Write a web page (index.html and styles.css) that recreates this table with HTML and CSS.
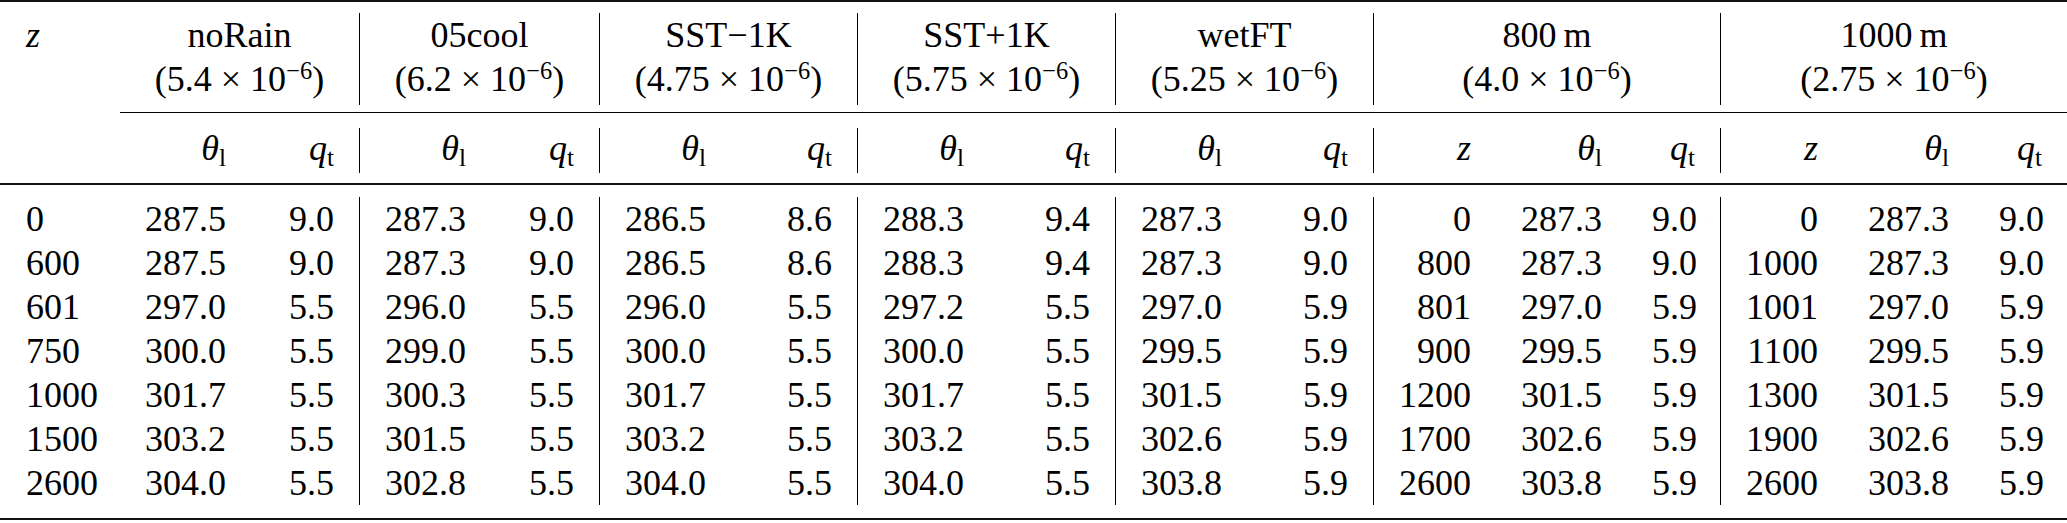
FILE: index.html
```html
<!DOCTYPE html>
<html lang="en">
<head>
    <meta charset="UTF-8">
    <title>Initial profiles</title>
    <link rel="stylesheet" href="styles.css">
</head>
<body>
    <table class="profiles">
        <colgroup>
            <col style="width:120px">
            <col style="width:131px"><col style="width:109px">
            <col style="width:131px"><col style="width:109px">
            <col style="width:131px"><col style="width:127px">
            <col style="width:131px"><col style="width:127px">
            <col style="width:131px"><col style="width:127px">
            <col style="width:122px"><col style="width:131px"><col style="width:94px">
            <col style="width:122px"><col style="width:131px"><col style="width:93px">
        </colgroup>
        <tbody>
            <tr class="rule heavy"><td colspan="17"></td></tr>
            <tr class="gap g11"><td colspan="17"></td></tr>
            <tr class="head">
                <td class="first"><i>z</i></td>
                <td colspan="2" class="group sep">noRain<br>(5.4 × 10<sup>−6</sup>)</td>
                <td colspan="2" class="group sep">05cool<br>(6.2 × 10<sup>−6</sup>)</td>
                <td colspan="2" class="group sep">SST−1K<br>(4.75 × 10<sup>−6</sup>)</td>
                <td colspan="2" class="group sep">SST+1K<br>(5.75 × 10<sup>−6</sup>)</td>
                <td colspan="2" class="group sep">wetFT<br>(5.25 × 10<sup>−6</sup>)</td>
                <td colspan="3" class="group sep">800&#8201;m<br>(4.0 × 10<sup>−6</sup>)</td>
                <td colspan="3" class="group">1000&#8201;m<br>(2.75 × 10<sup>−6</sup>)</td>
            </tr>
            <tr class="gap g7"><td colspan="17"></td></tr>
            <tr class="rule cmid"><td></td><td colspan="16"></td></tr>
            <tr class="gap g15"><td colspan="17"></td></tr>
            <tr class="vars">
                <td class="first"></td>
                <td><i>θ</i><sub>l</sub></td><td class="sep"><i>q</i><sub>t</sub></td>
                <td><i>θ</i><sub>l</sub></td><td class="sep"><i>q</i><sub>t</sub></td>
                <td><i>θ</i><sub>l</sub></td><td class="sep"><i>q</i><sub>t</sub></td>
                <td><i>θ</i><sub>l</sub></td><td class="sep"><i>q</i><sub>t</sub></td>
                <td><i>θ</i><sub>l</sub></td><td class="sep"><i>q</i><sub>t</sub></td>
                <td><i>z</i></td><td><i>θ</i><sub>l</sub></td><td class="sep"><i>q</i><sub>t</sub></td>
                <td><i>z</i></td><td><i>θ</i><sub>l</sub></td><td><i>q</i><sub>t</sub></td>
            </tr>
            <tr class="gap g10"><td colspan="17"></td></tr>
            <tr class="rule mid"><td colspan="17"></td></tr>
            <tr class="gap g12"><td colspan="17"></td></tr>

            <tr>
                <td class="first">0</td>
                <td>287.5</td><td class="sep">9.0</td>
                <td>287.3</td><td class="sep">9.0</td>
                <td>286.5</td><td class="sep">8.6</td>
                <td>288.3</td><td class="sep">9.4</td>
                <td>287.3</td><td class="sep">9.0</td>
                <td>0</td><td>287.3</td><td class="sep">9.0</td>
                <td>0</td><td>287.3</td><td>9.0</td>
            </tr>
            <tr>
                <td class="first">600</td>
                <td>287.5</td><td class="sep">9.0</td>
                <td>287.3</td><td class="sep">9.0</td>
                <td>286.5</td><td class="sep">8.6</td>
                <td>288.3</td><td class="sep">9.4</td>
                <td>287.3</td><td class="sep">9.0</td>
                <td>800</td><td>287.3</td><td class="sep">9.0</td>
                <td>1000</td><td>287.3</td><td>9.0</td>
            </tr>
            <tr>
                <td class="first">601</td>
                <td>297.0</td><td class="sep">5.5</td>
                <td>296.0</td><td class="sep">5.5</td>
                <td>296.0</td><td class="sep">5.5</td>
                <td>297.2</td><td class="sep">5.5</td>
                <td>297.0</td><td class="sep">5.9</td>
                <td>801</td><td>297.0</td><td class="sep">5.9</td>
                <td>1001</td><td>297.0</td><td>5.9</td>
            </tr>
            <tr>
                <td class="first">750</td>
                <td>300.0</td><td class="sep">5.5</td>
                <td>299.0</td><td class="sep">5.5</td>
                <td>300.0</td><td class="sep">5.5</td>
                <td>300.0</td><td class="sep">5.5</td>
                <td>299.5</td><td class="sep">5.9</td>
                <td>900</td><td>299.5</td><td class="sep">5.9</td>
                <td>1100</td><td>299.5</td><td>5.9</td>
            </tr>
            <tr>
                <td class="first">1000</td>
                <td>301.7</td><td class="sep">5.5</td>
                <td>300.3</td><td class="sep">5.5</td>
                <td>301.7</td><td class="sep">5.5</td>
                <td>301.7</td><td class="sep">5.5</td>
                <td>301.5</td><td class="sep">5.9</td>
                <td>1200</td><td>301.5</td><td class="sep">5.9</td>
                <td>1300</td><td>301.5</td><td>5.9</td>
            </tr>
            <tr>
                <td class="first">1500</td>
                <td>303.2</td><td class="sep">5.5</td>
                <td>301.5</td><td class="sep">5.5</td>
                <td>303.2</td><td class="sep">5.5</td>
                <td>303.2</td><td class="sep">5.5</td>
                <td>302.6</td><td class="sep">5.9</td>
                <td>1700</td><td>302.6</td><td class="sep">5.9</td>
                <td>1900</td><td>302.6</td><td>5.9</td>
            </tr>
            <tr>
                <td class="first">2600</td>
                <td>304.0</td><td class="sep">5.5</td>
                <td>302.8</td><td class="sep">5.5</td>
                <td>304.0</td><td class="sep">5.5</td>
                <td>304.0</td><td class="sep">5.5</td>
                <td>303.8</td><td class="sep">5.9</td>
                <td>2600</td><td>303.8</td><td class="sep">5.9</td>
                <td>2600</td><td>303.8</td><td>5.9</td>
            </tr>

            <tr class="gap g13"><td colspan="17"></td></tr>
            <tr class="rule heavy"><td colspan="17"></td></tr>
        </tbody>
    </table>
</body>
</html>
```

FILE: styles.css
```css
body {
    margin: 0;
    background: #fff;
    color: #000;
    font-family: "Liberation Serif", "Times New Roman", serif;
}
.profiles {
    width: 2067px;
    table-layout: fixed;
    border-collapse: separate;
    border-spacing: 0;
    font-size: 36px;
}
.profiles td {
    padding: 0 25px;
    text-align: right;
    line-height: 44px;
    white-space: nowrap;
    vertical-align: top;
}
.profiles td.first {
    text-align: left;
    padding-left: 26px;
}
.profiles td.sep {
    border-right: 1px solid #000;
}
.profiles td.group {
    text-align: center;
    padding-bottom: 4px;
}
.profiles .vars td {
    line-height: 41px;
    padding-bottom: 4px;
}
sup {
    font-size: 0.68em;
    line-height: 0;
    vertical-align: 0.5em;
}
sub {
    font-size: 0.7em;
    line-height: 0;
    vertical-align: -0.22em;
}

/* rules and the white space around them */
.profiles .gap td,
.profiles .rule td {
    padding: 0;
    line-height: 0;
    font-size: 0;
}
.profiles .rule td {
    height: 0;
}
.profiles .heavy td {
    border-top: 2px solid #111;
}
.profiles .mid td {
    border-top: 2px solid #111;
}
.profiles .cmid td + td {
    border-top: 1px solid #000;
}
.g7 td { height: 7px; }
.g10 td { height: 10px; }
.g11 td { height: 11px; }
.g12 td { height: 12px; }
.g13 td { height: 13px; }
.g15 td { height: 15px; }
```
